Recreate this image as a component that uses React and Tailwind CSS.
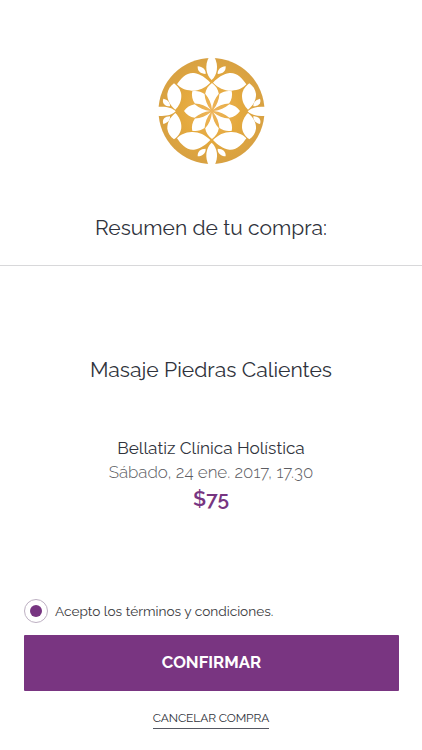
const Quarter = () => (
  <g>
    <path d="M-104 -81 C-92 -99 -76 -117 -53 -115 C-34 -112 -18 -101 -4 -86 C-20 -70 -40 -61 -60 -62 C-80 -63 -94 -70 -104 -81Z" />
    <path d="M-113 -84 C-98 -73 -91 -59 -91 -46 C-91 -29 -99 -15 -109 -5 C-125 -18 -134 -35 -133 -52 C-131 -66 -124 -76 -113 -84Z" />
    <path d="M-42 -135 C-27 -134 -17 -125 -18 -112 C-34 -112 -43 -121 -42 -135Z" />
    <path d="M-145 -38 C-132 -35 -124 -27 -125 -15 C-140 -15 -150 -24 -145 -38Z" />
  </g>
);

const Mandala = () => (
  <svg className="h-[120px] w-[120px]" viewBox="0 0 360 360" aria-hidden="true">
    <defs>
      <radialGradient id="gold">
        <stop offset="0" stopColor="#eeb55b" />
        <stop offset="0.55" stopColor="#e4a93e" />
        <stop offset="1" stopColor="#d8a142" />
      </radialGradient>
    </defs>
    <circle cx="181.5" cy="180" r="159" fill="url(#gold)" />
    <g fill="#fff" transform="translate(182 181)">
      <Quarter />
      <g transform="scale(-1 1)"><Quarter /></g>
      <g transform="scale(1 -1)"><Quarter /></g>
      <g transform="scale(-1 -1)"><Quarter /></g>
      {[0, 180].map((a) => (
        <path key={a} transform={`rotate(${a})`} d="M0 -94 C-17 -109 -22 -138 -8 -163 L8 -163 C22 -138 17 -109 0 -94Z" />
      ))}
      {[90, 270].map((a) => (
        <path key={a} transform={`rotate(${a})`} d="M0 -108 C-11 -118 -16 -138 -13 -163 L13 -163 C16 -138 11 -118 0 -108Z" />
      ))}
    </g>
    <g fill="#fff" transform="translate(183 180)">
      {[0, 45, 90, 135, 180, 225, 270, 315].map((a) => (
        <path key={a} transform={`rotate(${a})`} d="M0 -5 C-2 -23 -9 -39 -20.5 -52 C-18 -66 -11 -76 0 -84 C11 -76 18 -66 20.5 -52 C9 -39 2 -23 0 -5Z" />
      ))}
    </g>
  </svg>
);

export default function App() {
  return (
    <main className="flex h-[750px] w-full flex-col items-center overflow-hidden bg-white pt-[51px] font-['Raleway','Lato',sans-serif] whitespace-nowrap text-[#30333c]">
      <Mandala />
      <header className="flex h-[95px] w-full justify-center border-b border-[#d8d8da] pt-[42px]">
        <h1 className="text-[21px] leading-[30px]">Resumen de tu compra:</h1>
      </header>
      <h2 className="mt-[89px] text-[21.1px] leading-[30px]">Masaje Piedras Calientes</h2>
      <section className="mt-[51px] flex flex-col items-center">
        <p className="text-[17.2px] leading-6">Bellatiz Clínica Holística</p>
        <p className="text-[16.9px] leading-6 font-light text-[#5c5c62]">Sábado, 24 ene. 2017, 17.30</p>
        <p className="text-[21px] leading-[30px] font-semibold text-[#773581]">$75</p>
      </section>
      <div className="mt-[85px] flex w-full flex-col px-6">
        <label className="flex h-6 items-center gap-[7px]">
          <span className="flex size-6 items-center justify-center rounded-full border border-[#bdb0c2]">
            <span className="size-3 rounded-full bg-[#773581]" />
          </span>
          <span className="text-[13.65px] leading-5 text-[#3a3a3d]">Acepto los términos y condiciones.</span>
        </label>
        <button className="mt-3 h-14 w-[375px] rounded-[1px] bg-[#793581] text-[16.8px] font-bold text-white">CONFIRMAR</button>
      </div>
      <button className="mt-[19px] border-b border-[#555761] pb-px text-[12px] leading-[17px] tracking-[-0.12px]">CANCELAR COMPRA</button>
    </main>
  );
}
